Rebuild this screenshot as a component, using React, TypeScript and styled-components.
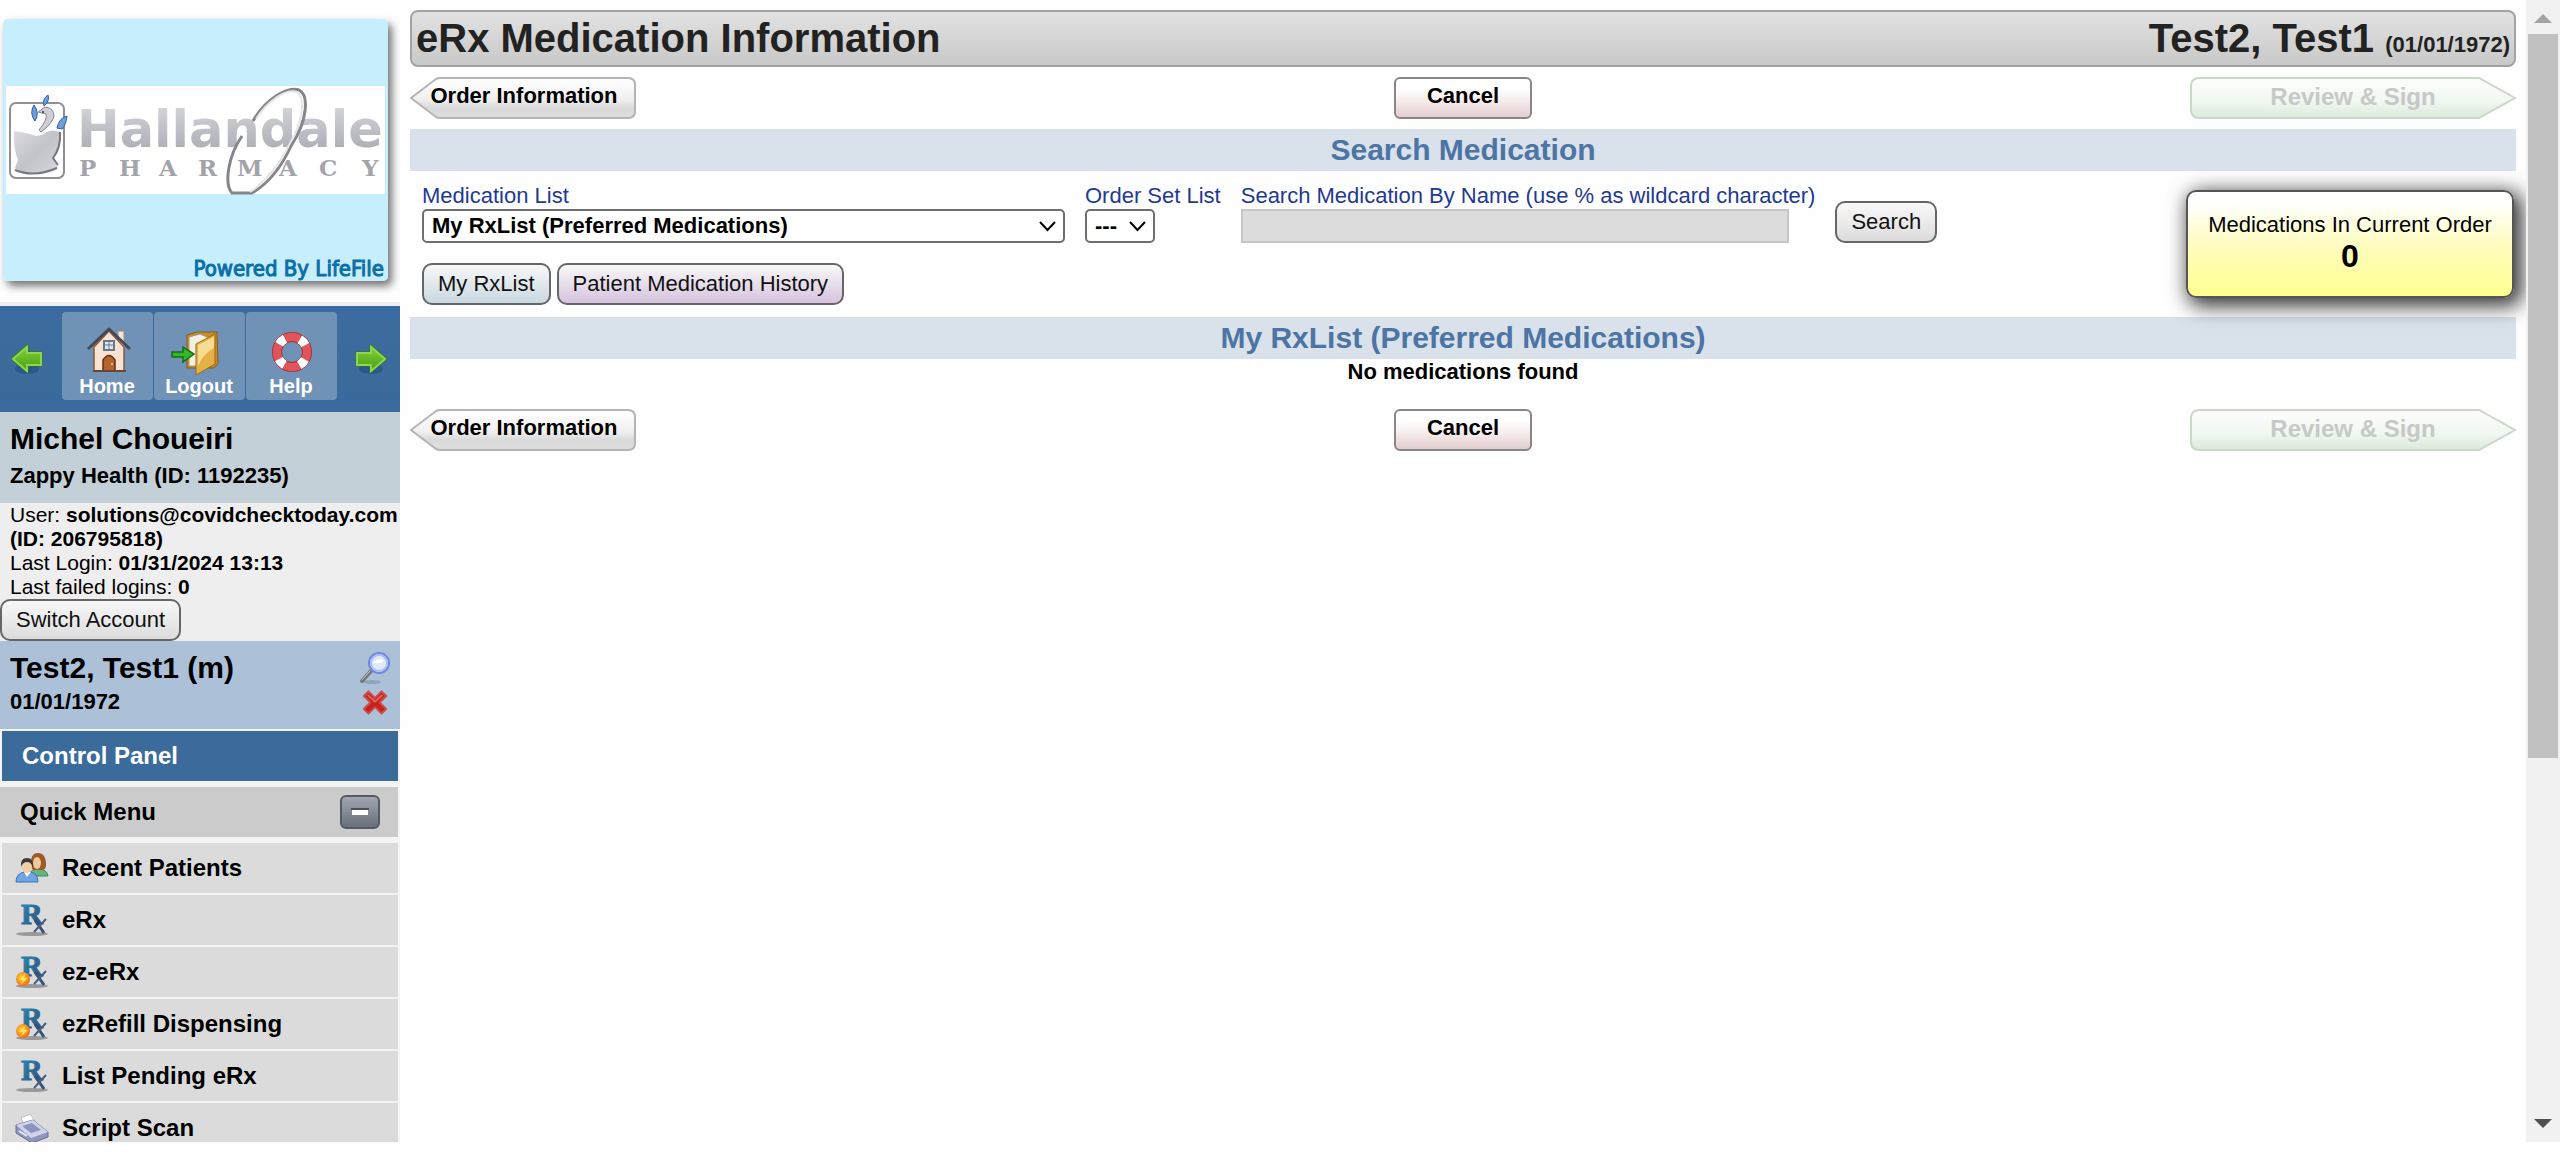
import React from "react";
import styled, { createGlobalStyle } from "styled-components";

const GlobalStyle = createGlobalStyle`
  *, *::before, *::after { box-sizing: border-box; }
  body {
    margin: 0;
    background: #fefefe;
    color: #000;
    font: 22px/26px "Liberation Sans", Arial, sans-serif;
    overflow: hidden;
  }
  button, input, select { font: inherit; color: inherit; margin: 0; }
  h1, h2, p, ul { margin: 0; padding: 0; }
  svg { display: block; flex: none; overflow: visible; }
`;

/* ---------- Page frame ---------- */

const Page = styled.div`
  display: flex;
  height: 100vh;
  padding-bottom: 12px;
`;

const Sidebar = styled.aside`
  flex: none;
  width: 400px;
  overflow: hidden;
  background: #f4f4f4;
`;

const Main = styled.main`
  flex: 1;
  min-width: 0;
  padding: 10px 10px 0;
`;

const ScrollTrack = styled.div`
  flex: none;
  display: flex;
  flex-direction: column;
  align-items: center;
  width: 34px;
  padding: 14px 2px;
  background: #f1f1f1;
`;

const ScrollThumb = styled.div`
  flex: 0 0 65%;
  align-self: stretch;
  margin-top: 11px;
  background: #c1c1c1;
`;

const ScrollSpace = styled.div`
  flex: 1;
`;

/* ---------- Sidebar ---------- */

const LogoBox = styled.div`
  height: 306px;
  background: #fefefe;
  border-bottom: 4px solid #f0f0f0;
`;

const NavBar = styled.nav`
  display: flex;
  align-items: flex-start;
  justify-content: space-between;
  height: 106px;
  padding: 6px 10px 0 8px;
  background: linear-gradient(#3a6ba2, #3c6c9d 20%, #3a6b9b 80%, #3b6aa0);
`;

const NavTiles = styled.div`
  display: flex;
  gap: 1px;
`;

const NavTile = styled.a`
  display: flex;
  flex-direction: column;
  align-items: center;
  width: 91px;
  height: 88px;
  padding-top: 14px;
  border-radius: 4px;
  background: #6f92b6;
  color: #fff;
  font-size: 20px;
  line-height: 24px;
  font-weight: bold;
  text-decoration: none;
`;

const IconButton = styled.button`
  display: block;
  padding: 0;
  border: 0;
  background: none;
`;

const NavArrow = styled(IconButton)`
  align-self: flex-start;
  margin-top: 28px;
`;

const AccountPanel = styled.section`
  padding: 10px 10px 14px;
  background: #c3d0d8;
  font-weight: bold;
`;

const PersonName = styled.h2`
  font-size: 30px;
  line-height: 34px;
`;

const AccountName = styled.p`
  margin-top: 7px;
`;

const LoginPanel = styled.section`
  background: #eee;
`;

const LoginText = styled.p`
  padding-left: 10px;
  font-size: 21px;
  line-height: 24px;
`;

const PatientPanel = styled.section`
  display: flex;
  justify-content: space-between;
  padding: 10px 8px 14px 10px;
  background: #acc0d8;
  font-weight: bold;
`;

const BirthDate = styled.p`
  margin-top: 4px;
`;

const PatientTools = styled.div`
  display: flex;
  flex-direction: column;
  align-items: center;
  gap: 5px;
`;

const ControlPanelLink = styled.a`
  display: block;
  margin: 2px 2px 6px;
  padding-left: 20px;
  background: #3a6b9b;
  color: #fff;
  font-size: 24px;
  line-height: 50px;
  font-weight: bold;
  text-decoration: none;
`;

const MenuHeader = styled.div`
  display: flex;
  align-items: center;
  justify-content: space-between;
  margin: 0 2px 6px 0;
  padding: 0 18px 0 20px;
  background: #cbcbcb;
  font-size: 24px;
  line-height: 50px;
  font-weight: bold;
`;

const MenuList = styled.ul`
  display: flex;
  flex-direction: column;
  gap: 2px;
  list-style: none;
`;

const MenuLink = styled.a`
  display: flex;
  align-items: center;
  gap: 14px;
  margin: 0 2px;
  padding-left: 14px;
  background: #dbdbdb;
  color: #000;
  font-size: 24px;
  line-height: 50px;
  font-weight: bold;
  text-decoration: none;
`;

/* ---------- Main area ---------- */

const TitleBar = styled.header`
  display: flex;
  justify-content: space-between;
  padding: 0 4px;
  border: 2px solid #a3a3a3;
  border-radius: 8px;
  background: linear-gradient(#e2e2e2, #c8c8c8);
  color: #222;
  line-height: 53px;
`;

const Title = styled.h1`
  font-size: 40px;
  font-weight: bold;
`;

const TitleNote = styled.small`
  font-size: 22px;
  line-height: 26px;
`;

const StepBar = styled.div`
  display: grid;
  grid-template-columns: 1fr auto 1fr;
  align-items: center;
  padding: 10px 0;
`;

const CancelButton = styled.button`
  width: 138px;
  height: 42px;
  padding: 0 0 4px;
  border: 2px solid #8a8688;
  border-radius: 6px;
  background: linear-gradient(#fff 25%, #f7eeee 55%, #e3cdcf);
  font-weight: bold;
`;

const ArrowButton = styled.button<{ $width: number; $forward?: boolean }>`
  position: relative;
  width: ${(p) => p.$width}px;
  height: 42px;
  padding: ${(p) => (p.$forward ? "0 0 2px" : "0 0 4px 2px")};
  border: 0;
  background: none;
  font-size: ${(p) => (p.$forward ? 24 : 22)}px;
  font-weight: bold;
  color: ${(p) => (p.$forward ? "#c8c8c8" : "#000")};
  justify-self: ${(p) => (p.$forward ? "end" : "start")};
`;

const ArrowShape = styled.svg`
  position: absolute;
  inset: 0;
`;

const ArrowLabel = styled.span`
  position: relative;
`;

const SectionTitle = styled.h2`
  background: #d9e1ea;
  color: #4c74a4;
  font-size: 30px;
  line-height: 42px;
  text-align: center;
`;

const SearchArea = styled.section`
  display: flex;
  align-items: flex-start;
  justify-content: space-between;
  padding: 12px 2px 12px 12px;
`;

const SearchForm = styled.form`
  display: flex;
  flex-direction: column;
  gap: 20px;
`;

const FieldRow = styled.div`
  display: flex;
  align-items: flex-end;
  gap: 20px;
`;

const Field = styled.div`
  display: flex;
  flex-direction: column;
  align-items: flex-start;
`;

const Label = styled.label`
  color: #1f3a93;
`;

const SelectWrap = styled.div`
  position: relative;
  svg {
    position: absolute;
    right: 9px;
    top: 11px;
    pointer-events: none;
  }
`;

const Select = styled.select<{ $width: number }>`
  appearance: none;
  display: block;
  width: ${(p) => p.$width}px;
  height: 34px;
  padding: 0 0 0 8px;
  border: 2px solid #6f6f6f;
  border-radius: 5px;
  background: #fff;
  font-weight: bold;
`;

const NameInput = styled.input`
  width: 548px;
  height: 34px;
  border: 2px solid #c6c6c6;
  border-radius: 0;
  background: #dcdcdc;
`;

const ButtonRow = styled.div`
  display: flex;
  gap: 6px;
`;

const Button = styled.button<{ $tint: string }>`
  height: 42px;
  padding: 0 14px;
  border: 2px solid #666;
  border-radius: 10px;
  background: linear-gradient(#f8f8f8, ${(p) => p.$tint});
  color: #111;
`;

const OrderCard = styled.div`
  width: 328px;
  margin-top: 7px;
  padding: 20px 0 22px;
  border: 2px solid #555;
  border-radius: 10px;
  background: linear-gradient(#fff 10%, #fffcc0 50%, #ffff90);
  box-shadow: 5px 5px 20px 3px rgba(0, 0, 0, 0.8);
  text-align: center;
`;

const OrderCount = styled.p`
  font-size: 32px;
  line-height: 36px;
  font-weight: bold;
`;

const EmptyNote = styled.p`
  margin-bottom: 14px;
  font-weight: bold;
  text-align: center;
`;

/* ---------- Drawings ---------- */

const Logo = () => (
  <svg width="400" height="302" viewBox="0 0 400 302" role="img" aria-label="Hallandale Pharmacy, Powered By LifeFile">
    <defs>
      <filter id="cardShadow" x="-5%" y="-5%" width="115%" height="115%">
        <feDropShadow dx="4" dy="5" stdDeviation="4" floodColor="#000" floodOpacity="0.55" />
      </filter>
      <linearGradient id="silver" x1="0" y1="0" x2="1" y2="1">
        <stop offset="0" stopColor="#dcdce2" />
        <stop offset="0.5" stopColor="#c2c2c9" />
        <stop offset="1" stopColor="#d8d8de" />
      </linearGradient>
      <linearGradient id="silverText" x1="0" y1="0" x2="0" y2="1">
        <stop offset="0" stopColor="#d8d8df" />
        <stop offset="1" stopColor="#a6a6ae" />
      </linearGradient>
    </defs>
    <rect x="3" y="19" width="385" height="262" rx="5" fill="#c6eefd" filter="url(#cardShadow)" />
    <rect x="6" y="86" width="379" height="108" fill="#fff" />
    <rect x="10" y="103" width="54" height="75" rx="6" fill="none" stroke="#8f8f94" strokeWidth="2" />
    <path d="M14 131Q24 132 37 136L44 134Q50 128 60 132 62 146 54 158L58 167Q52 174 36 174 22 174 15 168L18 160Q13 148 14 131Z" fill="url(#silver)" />
    <path d="M60 132Q61 148 53 158L58 165M15 170Q34 178 57 168" fill="none" stroke="#77777f" strokeWidth="2" />
    <path d="M41 132Q52 124 54 116 54 108 45 107L38 112 46 114Q48 119 39 130Z" fill="#cfcfd6" stroke="#85858d" strokeWidth="1" />
    <circle cx="43" cy="112" r="1" fill="#333" />
    <path d="M44 106Q42 99 48 95 50 101 44 106ZM35 121Q29 113 34 105 40 113 35 121ZM57 128Q59 118 67 116 66 125 62 129Z" fill="#6f9fdd" stroke="#2f5f9f" strokeWidth="1" />
    <text x="77" y="147" fontFamily="'DejaVu Sans', sans-serif" fontWeight="bold" fontSize="51" fill="url(#silverText)">Hallandale</text>
    <text x="79 119 159 198 237 279 319 362" y="176" fontFamily="'DejaVu Serif', serif" fontWeight="bold" fontSize="23" fill="#a3a3aa">PHARMACY</text>
    <path d="M253 121C265 100 287 86 299 90C309 95 308 120 291 146C280 170 266 185 252 193H232C224 184 228 156 242 136" fill="none" stroke="#85858c" strokeWidth="3" />
    <path d="M256 119C268 100 287 88 297 92C305 98 304 120 289 145C279 166 264 183 250 192" fill="none" stroke="#e4e4ea" strokeWidth="2" />
    <text x="384" y="276" textAnchor="end" fontFamily="'DejaVu Sans Condensed', 'DejaVu Sans', sans-serif" fontSize="22" fill="#0a6ea8" stroke="#0a6ea8" strokeWidth="1">Powered By LifeFile</text>
  </svg>
);

const GreenArrow = ({ flip }: { flip?: boolean }) => (
  <svg width="36" height="36" viewBox="0 0 36 36">
    <defs>
      <linearGradient id="leaf" x1="0" y1="0" x2="0" y2="1">
        <stop offset="0" stopColor="#8ed23c" />
        <stop offset="1" stopColor="#3f9c10" />
      </linearGradient>
    </defs>
    <g transform={flip ? "matrix(-1 0 0 1 36 0)" : undefined}>
      <ellipse cx="19" cy="29" rx="12" ry="5" fill="#1f3f77" opacity="0.45" />
      <path d="M3 19L20 4V12H34V26H20V33Z" fill="url(#leaf)" stroke="#2c7a10" strokeWidth="1" />
      <path d="M5 19L19 7V13H33V25H19V31Z" fill="none" stroke="#8fd44e" strokeWidth="2" />
    </g>
  </svg>
);

const HouseIcon = () => (
  <svg width="48" height="48" viewBox="0 0 48 48">
    <path d="M35 5h6v16l-6-6z" fill="#f1e6dc" stroke="#a58c78" />
    <path d="M11 21L26 5 41 21V45H11z" fill="#f7e3d2" stroke="#8d5a3c" strokeWidth="1.5" />
    <path d="M5 23L26 3 47 23" fill="none" stroke="#444a55" strokeWidth="3" strokeLinejoin="round" />
    <rect x="21" y="15" width="10" height="9" fill="#dce9f5" stroke="#6c7786" strokeWidth="2" />
    <path d="M26 15v9M21 19h10" stroke="#6c7786" />
    <path d="M20 45V34q6-9 12 0V45z" fill="#b5652c" stroke="#5f3216" strokeWidth="1.5" />
    <circle cx="29" cy="38" r="1" fill="#ffd36b" />
    <path d="M10 45h33" stroke="#6b4731" strokeWidth="2" />
  </svg>
);

const LogoutIcon = () => (
  <svg width="48" height="48" viewBox="0 0 48 48">
    <g transform="translate(-4 0)">
      <path d="M16 9L26 6 46 6 47 38 42 42 16 42Z" fill="#c48b2c" stroke="#8a5c12" />
      <path d="M18 11L29 8 38 12V40H18Z" fill="#f3f0e6" stroke="#a89868" />
      <path d="M25 18L44 8V38L25 49Z" fill="#e5b045" stroke="#9c6c18" strokeWidth="1" />
      <path d="M27 19L43 11V22Q32 28 27 40Z" fill="#f9dc94" />
      <path d="M1 26H12V21L23 28 12 36V31H1Z" fill="#35b42c" stroke="#137014" strokeWidth="1.5" />
    </g>
  </svg>
);

const HelpIcon = () => (
  <svg width="48" height="48" viewBox="0 0 48 48">
    <circle cx="25" cy="26" r="15" fill="none" stroke="#a8363c" strokeWidth="10" />
    <circle cx="25" cy="26" r="15" fill="none" stroke="#e0555a" strokeWidth="8" />
    <circle cx="25" cy="26" r="15" fill="none" stroke="#fff" strokeWidth="9" strokeDasharray="8 15.56" strokeDashoffset="-7.8" />
  </svg>
);

const MagnifierIcon = () => (
  <svg width="34" height="34" viewBox="0 0 34 34">
    <ellipse cx="14" cy="31" rx="9" ry="2" fill="#7688a4" opacity="0.5" />
    <path d="M4 30L13 20" stroke="#6f7478" strokeWidth="4" strokeLinecap="round" />
    <path d="M4 29L12 20" stroke="#c9ccd0" strokeWidth="1" strokeLinecap="round" />
    <circle cx="21" cy="12" r="10" fill="#dfe9ff" stroke="#6f88dd" strokeWidth="2" />
    <circle cx="21" cy="12" r="8" fill="none" stroke="#aebef3" strokeWidth="2" />
    <path d="M15 12q6-7 12-2-6 3-12 2z" fill="#fff" />
  </svg>
);

const RemoveIcon = () => (
  <svg width="28" height="25" viewBox="0 0 30 26">
    <path d="M3 6L8 1 15 8 22 1 27 6 20 13 27 20 22 25 15 18 8 25 3 20 10 13Z" fill="#c9211e" stroke="#c9504c" strokeWidth="2" strokeLinejoin="round" />
    <path d="M7 5L15 12 23 5" fill="none" stroke="#e0635c" strokeWidth="2" />
  </svg>
);

const CollapseIcon = () => (
  <svg width="40" height="34" viewBox="0 0 40 34">
    <defs>
      <linearGradient id="steel" x1="0" y1="0" x2="0" y2="1">
        <stop offset="0" stopColor="#a2a9b2" />
        <stop offset="1" stopColor="#666d77" />
      </linearGradient>
    </defs>
    <rect x="1" y="1" width="38" height="32" rx="5" fill="url(#steel)" stroke="#555b64" strokeWidth="2" />
    <rect x="12" y="14" width="16" height="6" fill="#fff" />
    <path d="M11 14H29" stroke="#4a505a" strokeWidth="2" />
  </svg>
);

const PatientsIcon = () => (
  <svg width="32" height="32" viewBox="0 0 32 32">
    <path d="M13 23q2-6 9-6 9 0 10 7H14z" fill="#67b383" stroke="#3f8a5c" />
    <path d="M15 14q-1-13 7-13t8 12q0 4-3 5h-9q-3-1-3-4z" fill="#9c5a2a" />
    <ellipse cx="21" cy="11" rx="4" ry="6" fill="#f1c79c" />
    <path d="M0 30q0-9 9-10h5q8 1 8 10z" fill="#6fa5e3" stroke="#3f72b8" />
    <path d="M8 20l3 5 4-5z" fill="#fff" />
    <ellipse cx="11" cy="15" rx="5" ry="6" fill="#f4cfa6" />
    <path d="M5 15q-1-9 6-9t6 9q-2-5-6-5t-6 5z" fill="#3c3a3a" />
  </svg>
);

const RxIcon = ({ quick }: { quick?: boolean }) => (
  <svg width="32" height="32" viewBox="0 0 32 32">
    <defs>
      <linearGradient id="rxBlue" x1="0" y1="0" x2="1" y2="1">
        <stop offset="0" stopColor="#2a8fbd" />
        <stop offset="1" stopColor="#31496e" />
      </linearGradient>
      <radialGradient id="amber" cx="0.4" cy="0.4" r="0.7">
        <stop offset="0" stopColor="#ffd23c" />
        <stop offset="1" stopColor="#f05a10" />
      </radialGradient>
    </defs>
    <ellipse cx="16" cy="30" rx="16" ry="2" fill="#999" />
    <text x="5" y="20" fontFamily="'Liberation Serif', serif" fontSize="30" fill="url(#rxBlue)" stroke="url(#rxBlue)" strokeWidth="1">R</text>
    <path d="M19 16L28 29" stroke="#31547c" strokeWidth="3" />
    <path d="M18 28L30 15" stroke="#4a6080" strokeWidth="2" />
    {quick && (
      <>
        <circle cx="7" cy="23" r="7" fill="url(#amber)" />
        <path d="M10 17L3 24H7L4 29 12 22H8Z" fill="#ffe94a" />
      </>
    )}
  </svg>
);

const ScannerIcon = () => (
  <svg width="32" height="32" viewBox="0 0 32 32">
    <path d="M5 6L14 2 19 9 8 14z" fill="#fff" stroke="#b9bdd2" />
    <path d="M0 13L17 8 32 20V25L16 31 0 21z" fill="#8f95bd" stroke="#666d96" />
    <path d="M0 13L17 8 32 20 15 26z" fill="#cfd4ea" />
    <path d="M6 14L16 11 25 18 15 21z" fill="#8b94be" />
    <path d="M3 19l8 5" stroke="#e6e9f7" strokeWidth="2" />
  </svg>
);

const Chevron = () => (
  <svg width="17" height="12" viewBox="0 0 17 12">
    <path d="M1 2L8.500 10 16 2" fill="none" stroke="#000" strokeWidth="2" />
  </svg>
);

/* ---------- Composite parts ---------- */

const StepButtons = () => (
  <StepBar>
    <ArrowButton type="button" $width={226}>
      <ArrowShape width="226" height="42" viewBox="0 0 226 42">
        <defs>
          <linearGradient id="greyStep" x1="0" y1="0" x2="0" y2="1">
            <stop offset="0.1" stopColor="#fdfdfd" />
            <stop offset="0.55" stopColor="#efefef" />
            <stop offset="0.75" stopColor="#d9d9d9" />
            <stop offset="1" stopColor="#dedede" />
          </linearGradient>
        </defs>
        <path d="M1 21L26 2Q28 1 30 1H218Q225 1 225 8V34Q225 41 218 41H30Q28 41 26 40Z" fill="url(#greyStep)" stroke="#b4b4b4" strokeWidth="2" />
      </ArrowShape>
      <ArrowLabel>Order Information</ArrowLabel>
    </ArrowButton>
    <CancelButton type="button">Cancel</CancelButton>
    <ArrowButton type="button" disabled $forward $width={326}>
      <ArrowShape width="326" height="42" viewBox="0 0 326 42">
        <defs>
          <linearGradient id="greenStep" x1="0" y1="0" x2="0" y2="1">
            <stop offset="0.1" stopColor="#fbfdfb" />
            <stop offset="0.6" stopColor="#f0f6f0" />
            <stop offset="1" stopColor="#dce9dc" />
          </linearGradient>
        </defs>
        <path d="M1 8Q2 1 9 1H289L325 21 289 41H9Q2 41 1 34Z" fill="url(#greenStep)" stroke="#cad8ca" strokeWidth="2" />
      </ArrowShape>
      <ArrowLabel>Review &amp; Sign</ArrowLabel>
    </ArrowButton>
  </StepBar>
);

const menuItems = [
  { label: "Recent Patients", icon: <PatientsIcon /> },
  { label: "eRx", icon: <RxIcon /> },
  { label: "ez-eRx", icon: <RxIcon quick /> },
  { label: "ezRefill Dispensing", icon: <RxIcon quick /> },
  { label: "List Pending eRx", icon: <RxIcon /> },
  { label: "Script Scan", icon: <ScannerIcon /> },
];

export default function App() {
  return (
    <>
      <GlobalStyle />
      <Page>
        <Sidebar>
          <LogoBox>
            <Logo />
          </LogoBox>
          <NavBar>
            <NavArrow type="button" aria-label="Back">
              <GreenArrow />
            </NavArrow>
            <NavTiles>
              <NavTile href="#home">
                <HouseIcon />
                Home
              </NavTile>
              <NavTile href="#logout">
                <LogoutIcon />
                Logout
              </NavTile>
              <NavTile href="#help">
                <HelpIcon />
                Help
              </NavTile>
            </NavTiles>
            <NavArrow type="button" aria-label="Forward">
              <GreenArrow flip />
            </NavArrow>
          </NavBar>
          <AccountPanel>
            <PersonName>Michel Choueiri</PersonName>
            <AccountName>Zappy Health (ID: 1192235)</AccountName>
          </AccountPanel>
          <LoginPanel>
            <LoginText>
              User: <b>solutions@covidchecktoday.com</b> <b>(ID: 206795818)</b>
            </LoginText>
            <LoginText>
              Last Login: <b>01/31/2024 13:13</b>
            </LoginText>
            <LoginText>
              Last failed logins: <b>0</b>
            </LoginText>
            <Button type="button" $tint="#dcdcdc">
              Switch Account
            </Button>
          </LoginPanel>
          <PatientPanel>
            <div>
              <PersonName>Test2, Test1 (m)</PersonName>
              <BirthDate>01/01/1972</BirthDate>
            </div>
            <PatientTools>
              <IconButton type="button" aria-label="Find patient">
                <MagnifierIcon />
              </IconButton>
              <IconButton type="button" aria-label="Clear patient">
                <RemoveIcon />
              </IconButton>
            </PatientTools>
          </PatientPanel>
          <ControlPanelLink href="#control-panel">Control Panel</ControlPanelLink>
          <MenuHeader>
            Quick Menu
            <IconButton type="button" aria-label="Collapse Quick Menu">
              <CollapseIcon />
            </IconButton>
          </MenuHeader>
          <MenuList>
            {menuItems.map((item) => (
              <li key={item.label}>
                <MenuLink href="#menu">
                  {item.icon}
                  {item.label}
                </MenuLink>
              </li>
            ))}
          </MenuList>
        </Sidebar>

        <Main>
          <TitleBar>
            <Title>eRx Medication Information</Title>
            <Title as="div">
              Test2, Test1 <TitleNote>(01/01/1972)</TitleNote>
            </Title>
          </TitleBar>
          <StepButtons />
          <SectionTitle>Search Medication</SectionTitle>
          <SearchArea>
            <SearchForm onSubmit={(e) => e.preventDefault()}>
              <FieldRow>
                <Field>
                  <Label htmlFor="med-list">Medication List</Label>
                  <SelectWrap>
                    <Select id="med-list" $width={643}>
                      <option>My RxList (Preferred Medications)</option>
                    </Select>
                    <Chevron />
                  </SelectWrap>
                </Field>
                <Field>
                  <Label htmlFor="order-set">Order Set List</Label>
                  <SelectWrap>
                    <Select id="order-set" $width={70}>
                      <option>---</option>
                    </Select>
                    <Chevron />
                  </SelectWrap>
                </Field>
                <Field>
                  <Label htmlFor="med-name">Search Medication By Name (use % as wildcard character)</Label>
                  <NameInput id="med-name" type="text" disabled />
                </Field>
                <Button type="submit" $tint="#dcdcdc">
                  Search
                </Button>
              </FieldRow>
              <ButtonRow>
                <Button type="button" $tint="#c9d8e0">
                  My RxList
                </Button>
                <Button type="button" $tint="#d6c3de">
                  Patient Medication History
                </Button>
              </ButtonRow>
            </SearchForm>
            <OrderCard>
              <p>Medications In Current Order</p>
              <OrderCount>0</OrderCount>
            </OrderCard>
          </SearchArea>
          <SectionTitle>My RxList (Preferred Medications)</SectionTitle>
          <EmptyNote>No medications found</EmptyNote>
          <StepButtons />
        </Main>

        <ScrollTrack aria-hidden="true">
          <svg width="18" height="9" viewBox="0 0 18 9">
            <path d="M0 9L9 0 18 9z" fill="#a3a3a3" />
          </svg>
          <ScrollThumb />
          <ScrollSpace />
          <svg width="18" height="9" viewBox="0 0 18 9">
            <path d="M0 0L9 9 18 0z" fill="#505050" />
          </svg>
        </ScrollTrack>
      </Page>
    </>
  );
}
